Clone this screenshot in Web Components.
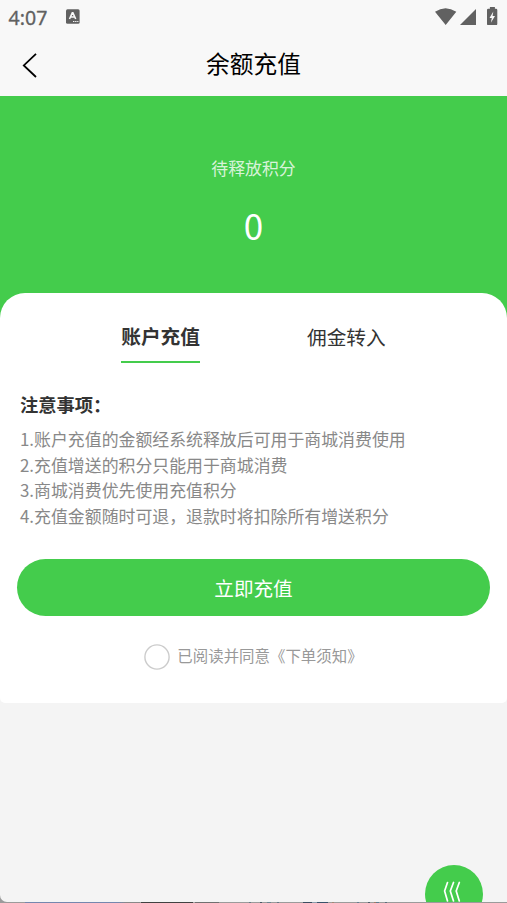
<!DOCTYPE html>
<html lang="zh-CN">
<head>
<meta charset="utf-8">
<title>余额充值</title>
<style>
html,body{margin:0;height:100%;overflow:hidden}
body{font-family:"Noto Sans CJK SC",sans-serif;color:#333;background:#9b9b9b}
</style>
</head>
<body>
<recharge-app></recharge-app>
<script>
const define = (name, html) => customElements.define(name, class extends HTMLElement {
  constructor() {
    super();
    this.attachShadow({ mode: 'open' }).innerHTML = html;
  }
});

define('status-bar', `
<style>
:host{display:flex;align-items:center;height:32px;padding:0 8px 0 8px;box-sizing:border-box;color:#616161}
.time{font:400 19.5px/34px "Noto Sans",sans-serif;-webkit-text-stroke:.3px #616161;padding:3px 0 0 .6px;width:57.4px}
svg{display:block;fill:#616161}
.gap{flex:1}
</style>
<span class="time">4:07</span>
<svg width="14" height="15" viewBox="0 0 14 15"><rect y=".2" width="13.6" height="14.6" rx="1.5"/><path d="M3.5 10 6.3 3.8h.6L9.7 10M4.7 8h3.8" fill="none" stroke="#f8f8f8" stroke-width="1.6"/><path d="M7 12h1.4v1.1H7zM9.1 12h1.4v1.1H9.1zM11.2 12h1.2v1.1h-1.2z" fill="#f8f8f8"/></svg>
<span class="gap"></span>
<svg width="64" height="20" viewBox="0 0 64 20"><path d="M0 5.8Q10.5-1.4 21.300 5.800L10.700 19.100ZM41 3.100V19H25ZM52 4q0-1.200 1.200-1.200h1.700V1.100h5v1.700h1.200q1.200 0 1.200 1.200v13.900q0 1.200-1.200 1.200h-7.900q-1.200 0-1.200-1.200z"/><path d="M58.300 5.500 54.500 12.100h2.300l-.9 4.600 4.100-6.800h-2.400z" fill="#f8f8f8"/></svg>
`);

define('nav-bar', `
<style>
:host{display:grid;grid-template-columns:60px 1fr 60px;align-items:center;height:64px;color:#000}
svg{display:block;margin:3px 0 0 22px}
h1{margin:0;text-align:center;font-size:23.7px;font-weight:400;line-height:62px;height:64px}
</style>
<svg width="16" height="25" viewBox="0 0 16 25" fill="none" stroke="#000" stroke-width="1.8"><path d="M14 .8 1.800 12.400 14 24"/></svg>
<h1><slot></slot></h1>
`);

define('points-panel', `
<style>
:host{display:block;height:222px;box-sizing:border-box;padding-top:59px;background:#44cc4c;color:#fff;text-align:center}
.label{font-size:16.900px;line-height:25px;color:rgba(255,255,255,.8)}
.value{font-size:35px;line-height:50px;margin-top:20px}
</style>
<div class="label"><slot name="label"></slot></div>
<div class="value"><slot></slot></div>
`);

define('tab-item', `
<style>
:host{display:block;font-size:19.700px;line-height:29px;padding-bottom:11px;border-bottom:2px solid transparent}
:host([active]){font-weight:700;border-color:#44cc4c}
:host(:not([active])){padding-top:1px;padding-bottom:10px}
</style><slot></slot>
`);

define('tab-row', `
<style>
:host{display:flex;justify-content:center;gap:107px;height:42px}
</style><slot></slot>
`);

define('notice-list', `
<style>
:host{display:block;margin:26px 20px 0}
h2{margin:0;font-size:18.300px;line-height:30px;font-weight:700}
.items{margin-top:7.800px;font-size:16.900px;line-height:25.400px;color:#888}
::slotted(div){white-space:nowrap}
</style>
<h2><slot name="heading"></slot></h2>
<div class="items"><slot></slot></div>
`);

define('primary-button', `
<style>
:host{display:block;margin:30.800px 17px 0}
button{display:block;width:100%;height:57.500px;border:0;border-radius:29px;background:#44cc4c;color:#fff;font:400 19.600px/57px "Noto Sans CJK SC",sans-serif;padding:0}
</style>
<button><slot></slot></button>
`);

define('agree-check', `
<style>
:host{display:flex;justify-content:center;align-items:center;gap:7px;margin:27.500px 7px 0 0;height:26px;font-size:15.450px;color:#999}
svg{display:block;flex:none}
span{line-height:24px;margin-top:-4px;margin-right:-7px}
</style>
<svg width="26" height="26" viewBox="0 0 26 26"><circle cx="13" cy="13" r="12.100" fill="none" stroke="#ccc" stroke-width="1.400"/></svg><span><slot></slot></span>
`);

define('content-card', `
<style>
:host{display:block;height:410px;box-sizing:border-box;margin-top:-24.700px;padding-top:27.200px;background:#fff;border-radius:25px 25px 5px 5px}
</style><slot></slot>
`);

define('float-button', `
<style>
:host{position:absolute;left:425px;top:865px;width:58px;height:58px;border-radius:50%;background:#44cc4c}
svg{display:block}
</style>
<svg width="58" height="58" viewBox="0 0 58 58" fill="none" stroke="#fff" stroke-width="1.700" stroke-linecap="round"><path d="M22.500 17.500 19.600 26 22.500 36M28.500 17.500 25.300 26 28.500 36M34.300 17.500 31.200 26 34.300 36"/></svg>
`);

define('desktop-edge', `
<style>
:host{display:block;height:1px;background:
linear-gradient(90deg,transparent 25px,#7587ae 25px 118px,#888 126px 140px,transparent 140px 141px,#414141 141px 193px,#aaa 193px 195px,#707070 195px 219px,transparent 219px 249px,#667986 249px 251px,transparent 251px 260px,#475766 260px 262px,transparent 262px 267px,#6b8490 267px 271px,transparent 271px 277px,#657785 277px 279px,transparent 279px 303px,#3c4d60 303px 312px,#8da0ae 312px 317px,#39526a 317px 328px,transparent 328px 332px,#a18674 332px 334px,transparent 334px 357px,#657e91 357px 359px,transparent 359px 368px,#4f5d69 368px 370px,transparent 370px 374px,#a27b65 374px 376px,#5d7c8e 376px 379px,transparent 379px 385px,#596d7b 385px 387px,transparent 387px),#9b9b9b}
</style>
`);

define('recharge-app', `
<style>
:host{display:block;width:507px;height:903px;background:#9b9b9b}
.screen{position:relative;height:902px;overflow:hidden;background:#f4f4f4;border-radius:0 0 0 7px}
.top{background:#f8f8f8}
content-card{position:relative}
</style>
<div class="screen">
  <div class="top"><status-bar></status-bar><nav-bar>余额充值</nav-bar></div>
  <points-panel><span slot="label">待释放积分</span>0</points-panel>
  <content-card>
    <tab-row><tab-item active>账户充值</tab-item><tab-item>佣金转入</tab-item></tab-row>
    <notice-list>
      <span slot="heading">注意事项：</span>
      <div>1.账户充值的金额经系统释放后可用于商城消费使用</div>
      <div>2.充值增送的积分只能用于商城消费</div>
      <div>3.商城消费优先使用充值积分</div>
      <div>4.充值金额随时可退，退款时将扣除所有增送积分</div>
    </notice-list>
    <primary-button>立即充值</primary-button>
    <agree-check>已阅读并同意《下单须知》</agree-check>
  </content-card>
  <float-button></float-button>
</div>
<desktop-edge></desktop-edge>
`);
</script>
</body>
</html>
